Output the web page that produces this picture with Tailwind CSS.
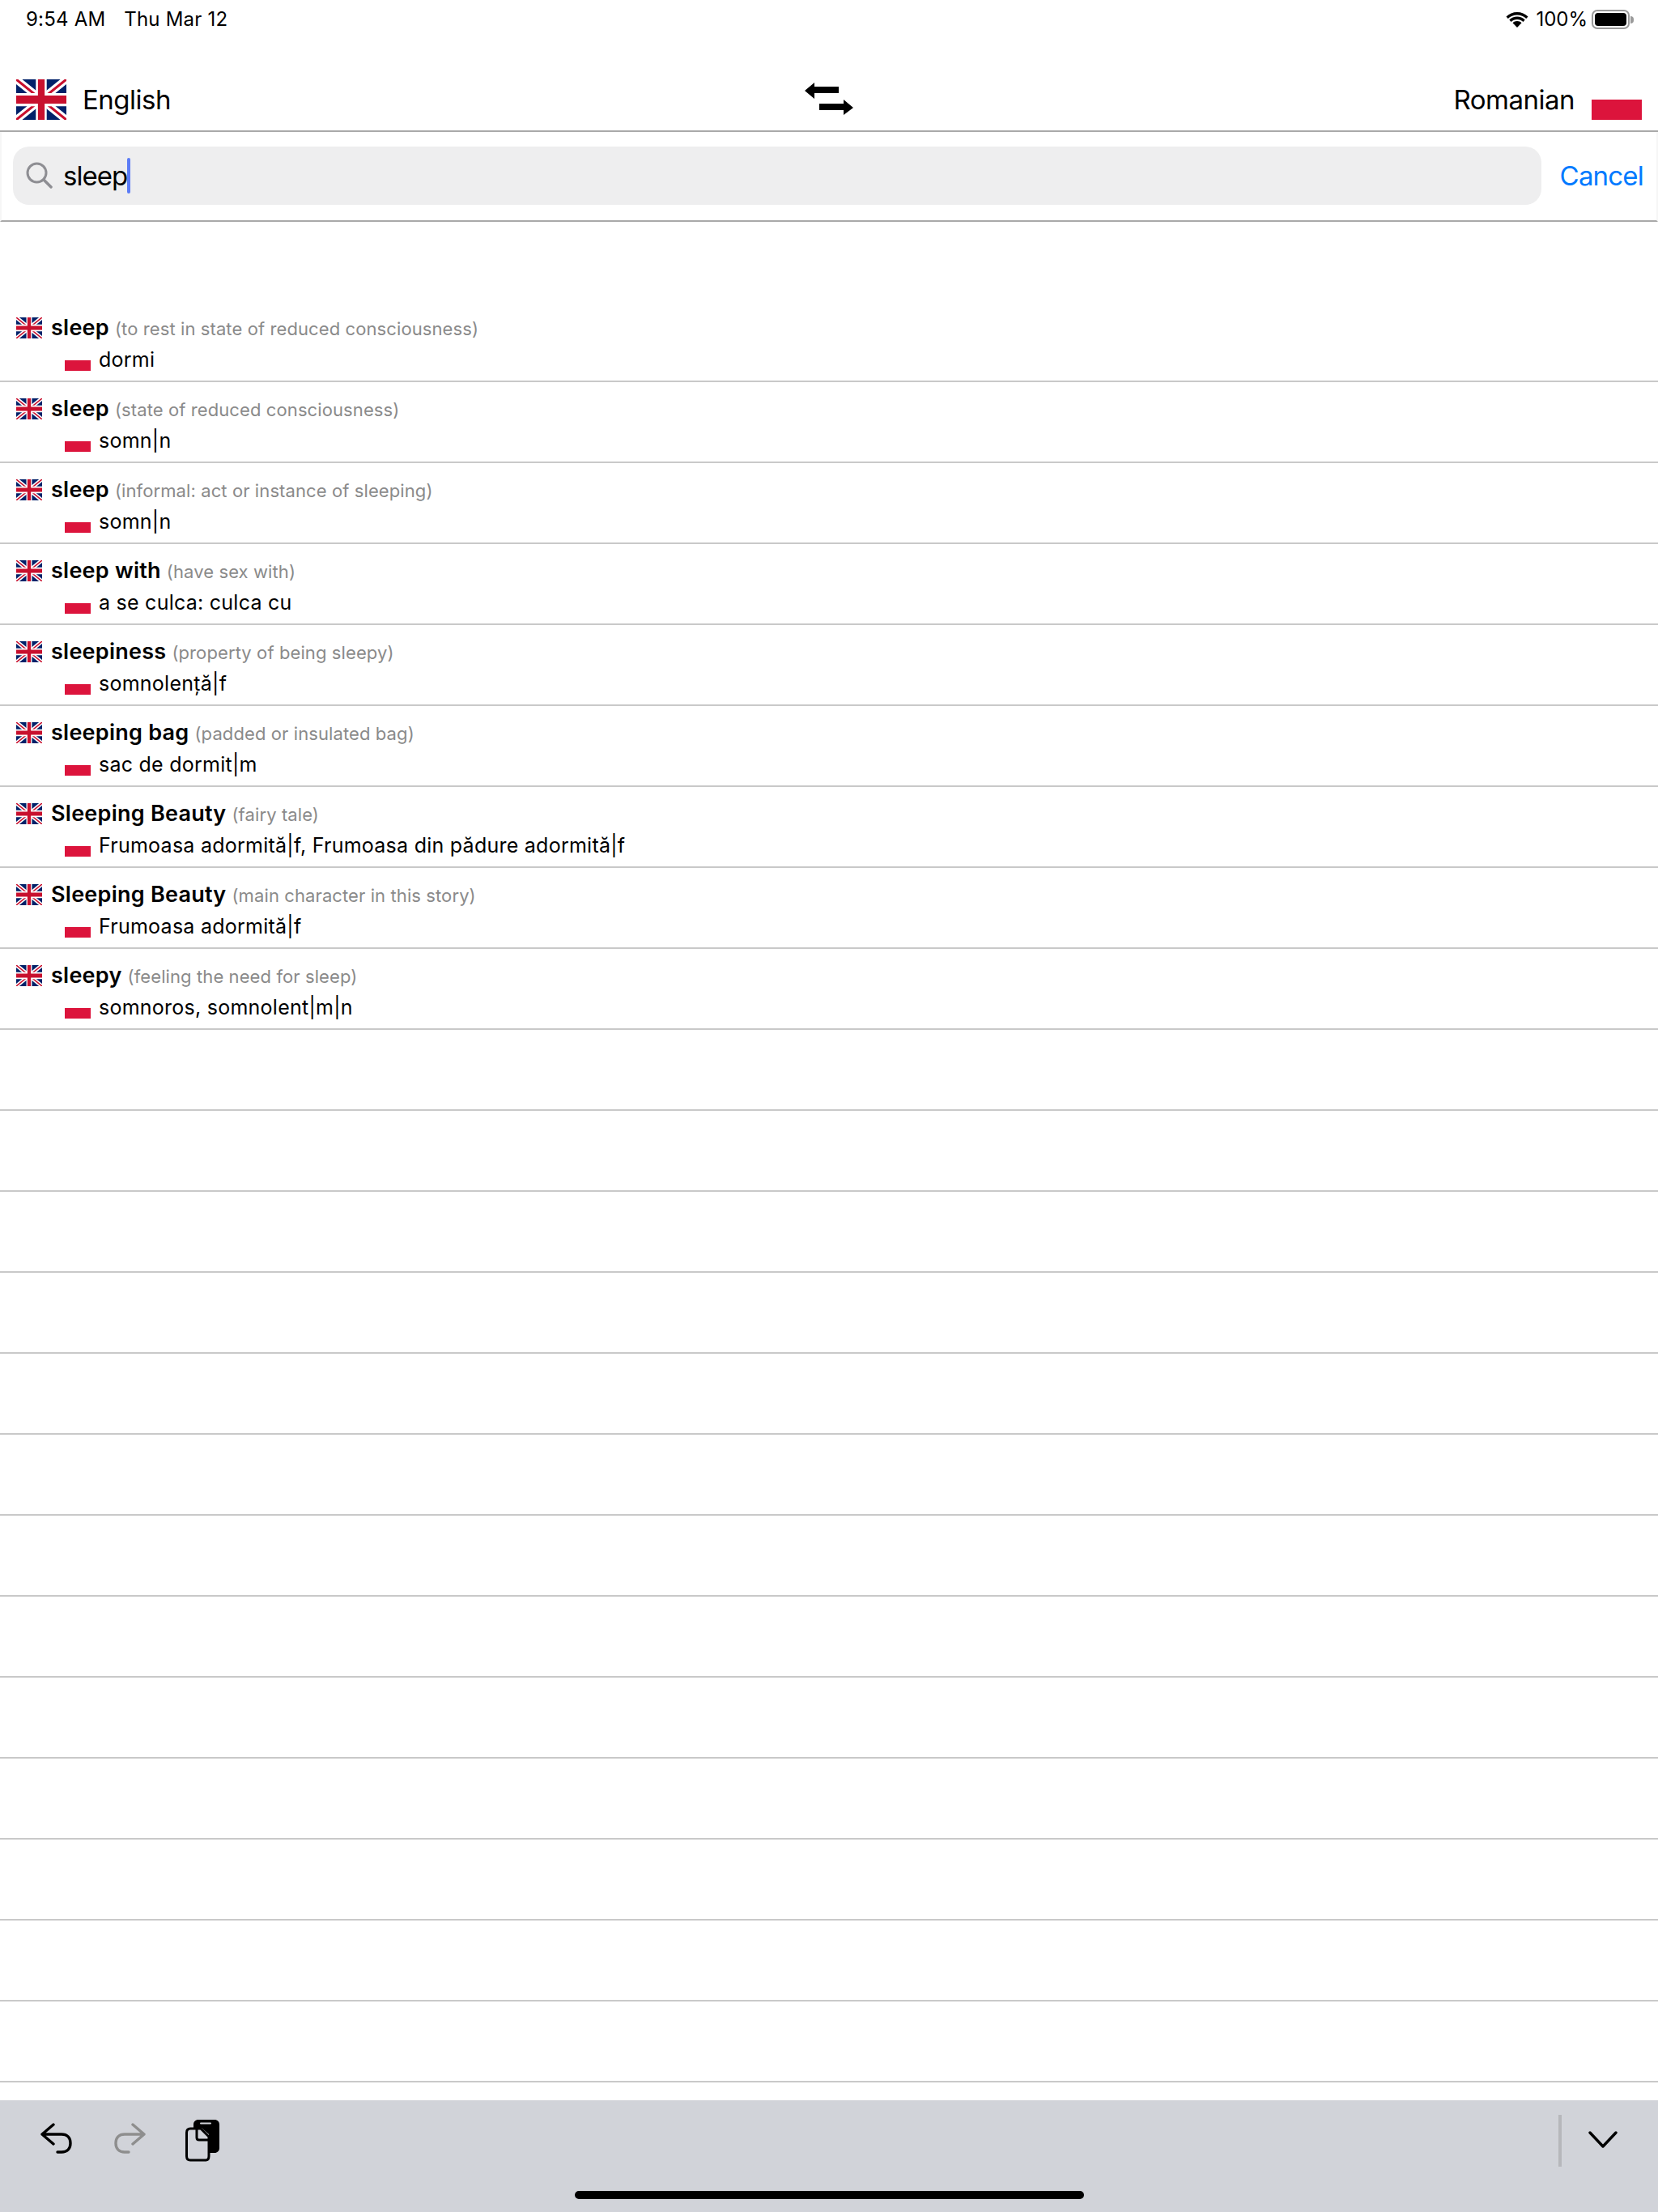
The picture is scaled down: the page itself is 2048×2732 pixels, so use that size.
<!DOCTYPE html>
<html lang="en">
<head>
    <meta charset="UTF-8">
    <title>Dictionary</title>
    <script src="https://cdn.jsdelivr.net/npm/@tailwindcss/browser@4"></script>
</head>
<body class="bg-white font-['Inter','Liberation_Sans',sans-serif] text-black">
    <svg class="hidden">
        <symbol id="uk" viewBox="0 0 60 40" preserveAspectRatio="none">
            <rect width="60" height="40" fill="#012169"/>
            <path d="M0 0L60 40M60 0L0 40" stroke="#fff" stroke-width="8"/>
            <path d="M0 0L60 40M60 0L0 40" stroke="#c8102e" stroke-width="2.6"/>
            <path d="M30 0V40M0 20H60" stroke="#fff" stroke-width="13"/>
            <path d="M30 0V40M0 20H60" stroke="#c8102e" stroke-width="8"/>
        </symbol>
    </svg>

    <div class="relative flex flex-col w-[2048px] h-[2732px] overflow-hidden">
        <!-- status bar -->
        <div class="flex justify-between h-[80px] pl-[32px] pr-[30px] pt-[9px] text-[24px] leading-[30px]">
            <div class="flex gap-[23px] tracking-[0.2px]">
                <span>9:54 AM</span>
                <span>Thu Mar 12</span>
            </div>
            <div class="flex h-[30px] items-center">
                <svg class="w-[28px] h-[20px]" viewBox="0 0 28 20">
                    <path d="M14 4.500C18.400 4.500 22.300 6.200 25.200 9L27.500 6.500C24 3 19.200 1 14 1S4 3 .5 6.500L2.800 9C5.700 6.200 9.600 4.500 14 4.500Z" fill="#000"/>
                    <path d="M14 10C16.900 10 19.500 11.100 21.400 13L23.700 10.500C21.100 8 17.700 6.500 14 6.500S6.900 8 4.300 10.500L6.600 13C8.500 11.100 11.100 10 14 10Z" fill="#000"/>
                    <path d="M14 12C11.900 12 10 12.800 8.500 14.200L14 20L19.500 14.200C18 12.800 16.100 12 14 12Z" fill="#000"/>
                </svg>
                <span class="ml-[9px]">100%</span>
                <div class="ml-[5px] w-[47px] h-[24px] rounded-[7px] border-2 border-[#9a9a9a] p-[2px]">
                    <div class="w-full h-full rounded-[4px] bg-black"></div>
                </div>
                <div class="ml-[1px] w-[4px] h-[9px] rounded-r-full bg-[#9a9a9a]"></div>
            </div>
        </div>

        <!-- language switcher -->
        <div class="flex items-start justify-between h-[83px] pt-[18px] pl-[20px] pr-[20px] border-b-2 border-[#a9a9a9]">
            <div class="flex items-center h-[50px] w-[400px]">
                <svg class="w-[62px] h-[50px]"><use href="#uk"/></svg>
                <span class="ml-[20px] text-[33px] leading-[50px] tracking-[-0.5px]">English</span>
            </div>
            <svg class="mt-[4px] w-[60px] h-[40px]" viewBox="0 0 60 40">
                <path d="M0 10L12 0V5H42V13H12V20Z" fill="#000"/>
                <path d="M18 26H48V21L60 31L48 40V34H18Z" fill="#000"/>
            </svg>
            <div class="flex items-end justify-end h-[50px] w-[400px]">
                <span class="mr-[21px] self-center text-[33px] leading-[50px] tracking-[-0.5px]">Romanian</span>
                <div class="w-[62px] h-[25px] bg-[#dc143c]"></div>
            </div>
        </div>

        <!-- search -->
        <div class="flex items-center h-[111px] pl-[14px] pr-[16px] pb-[2px] border-x-2 border-x-[#f6f6f6] border-b-2 border-b-[#a9a9a9]">
            <div class="flex items-center flex-1 h-[72px] pl-[16px] rounded-[20px] bg-[#eeeeef]">
                <svg class="w-[33px] h-[33px]" viewBox="0 0 33 33" fill="none" stroke="#8e8e93" stroke-width="3">
                    <circle cx="13.500" cy="13.500" r="11.500"/>
                    <path d="M22 22L31 31" stroke-linecap="round" stroke-width="3.500"/>
                </svg>
                <span class="ml-[13px] text-[33px] leading-[44px] tracking-[-1px]">sleep</span>
                <div class="w-[4px] h-[44px] rounded-full bg-[#5c7cf6]"></div>
            </div>
            <span class="ml-[23px] text-[33px] leading-[44px] tracking-[-0.8px] text-[#007aff]">Cancel</span>
        </div>

        <div class="h-[98px] shrink-0"></div>

        <!-- results -->
        <div id="rows"></div>

        <div class="flex-1"></div>

        <!-- keyboard accessory bar -->
        <div class="flex items-start h-[138px] bg-[#d1d3d9]">
            <svg class="ml-[50px] mt-[28px] w-[40px] h-[40px]" viewBox="0 0 40 40" fill="none" stroke="#000" stroke-width="3.400" stroke-linecap="round" stroke-linejoin="round">
                <path d="M16 2L2 14L16 26M2 14H26C33 14 37 18 37 25C37 32 33 36 26 36H21"/>
            </svg>
            <svg class="ml-[50px] mt-[28px] w-[40px] h-[40px]" viewBox="0 0 40 40" fill="none" stroke="#8e8e8e" stroke-width="3.400" stroke-linecap="round" stroke-linejoin="round">
                <path d="M24 2L38 14L24 26M38 14H14C7 14 3 18 3 25C3 32 7 36 14 36H19"/>
            </svg>
            <svg class="ml-[49px] mt-[24px] w-[42px] h-[52px]" viewBox="0 0 42 52">
                <path d="M16 0H36C39.500 0 42 2.500 42 6V35C42 38.500 39.500 41 36 41H29V18L20 10H10V6C10 2.500 12.500 0 16 0Z" fill="#000"/>
                <path d="M19 4.500H31" stroke="#d1d3d9" stroke-width="2" stroke-linecap="round"/>
                <path d="M6 11H19L29 21V45C29 48 27.500 50 25 50H6C3 50 1.500 48 1.500 45V16C1.500 13 3 11 6 11Z" fill="#d1d3d9" stroke="#000" stroke-width="3"/>
                <path d="M14 12V22C14 24 15 25 17 25H28" fill="none" stroke="#000" stroke-width="3"/>
            </svg>
            <div class="ml-auto mt-[18px] w-[4px] h-[64px] bg-[#b6b7bb]"></div>
            <svg class="ml-[33px] mr-[50px] mt-[38px] w-[36px] h-[21px]" viewBox="0 0 36 21" fill="none" stroke="#000" stroke-width="3.400" stroke-linecap="round" stroke-linejoin="round">
                <path d="M2 2L18 19L34 2"/>
            </svg>
        </div>

        <div class="absolute left-[710px] bottom-[16px] w-[629px] h-[10px] rounded-full bg-black"></div>
    </div>

    <script>
        const results = [
            ['sleep', '(to rest in state of reduced consciousness)', 'dormi'],
            ['sleep', '(state of reduced consciousness)', 'somn|n'],
            ['sleep', '(informal: act or instance of sleeping)', 'somn|n'],
            ['sleep with', '(have sex with)', 'a se culca: culca cu'],
            ['sleepiness', '(property of being sleepy)', 'somnolență|f'],
            ['sleeping bag', '(padded or insulated bag)', 'sac de dormit|m'],
            ['Sleeping Beauty', '(fairy tale)', 'Frumoasa adormită|f, Frumoasa din pădure adormită|f'],
            ['Sleeping Beauty', '(main character in this story)', 'Frumoasa adormită|f'],
            ['sleepy', '(feeling the need for sleep)', 'somnoros, somnolent|m|n']
        ];

        let html = '';
        for (let i = 0; i < 22; i++) {
            const r = results[i];
            html += '<div class="flex flex-col h-[100px] pt-[18px] border-b-2 border-[#c9c9c9]">';
            if (r) {
                html += `
                <div class="flex items-center h-[30px] pl-[20px]">
                    <svg class="w-[32px] h-[26px] shrink-0"><use href="#uk"/></svg>
                    <span class="ml-[11px] text-[27px] leading-[30px] font-semibold tracking-[0.25px]">${r[0]}</span>
                    <span class="ml-[7px] mt-[2px] text-[22px] leading-[30px] tracking-[0.1px] text-[#8a8a8a]">${r[1]}</span>
                </div>
                <div class="flex items-end h-[30px] mt-[9px] pl-[80px]">
                    <div class="w-[32px] h-[13px] mb-[1px] shrink-0 bg-[#dc143c]"></div>
                    <span class="ml-[10px] text-[25px] leading-[30px] tracking-[0.25px]">${r[2]}</span>
                </div>`;
            }
            html += '</div>';
        }
        document.getElementById('rows').innerHTML = html;
    </script>
</body>
</html>
